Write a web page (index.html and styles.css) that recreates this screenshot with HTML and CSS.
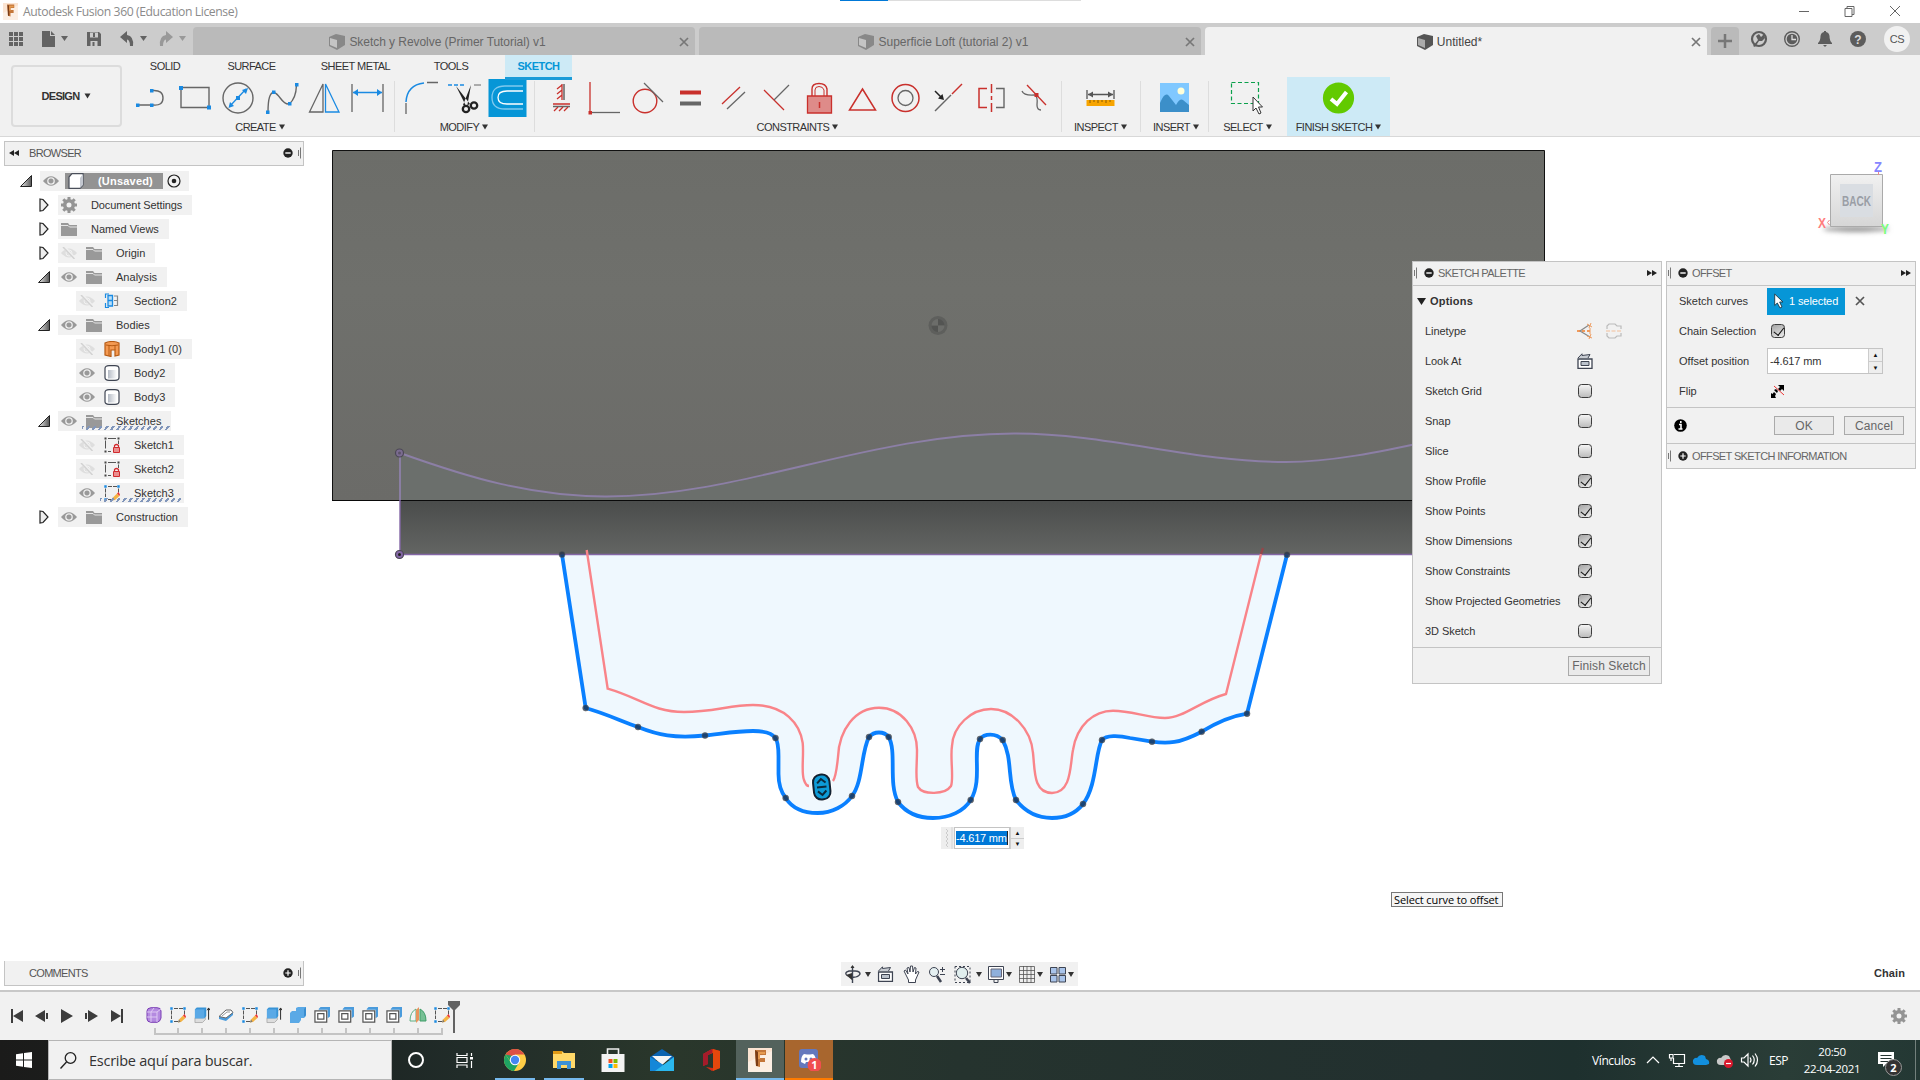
FILE: index.html
```html
<!DOCTYPE html>
<html lang="es">
<head>
<meta charset="utf-8">
<title>Autodesk Fusion 360 (Education License)</title>
<link rel="stylesheet" href="styles.css">
</head>
<body>
<svg class="defs" aria-hidden="true">
  <defs>
    <linearGradient id="gBody" x1="0" y1="0" x2="0" y2="1"><stop offset="0" stop-color="#6c6d69"/><stop offset=".4" stop-color="#6f706c"/><stop offset="1" stop-color="#6b6b68"/></linearGradient>
    <linearGradient id="gLower" x1="0" y1="0" x2="0" y2="1"><stop offset="0" stop-color="#4a4c4b"/><stop offset="1" stop-color="#636563"/></linearGradient>
    <linearGradient id="gCube" x1="0" y1="0" x2="0" y2="1"><stop offset="0" stop-color="#f1f1f1"/><stop offset="1" stop-color="#d6d6d6"/></linearGradient>
    <linearGradient id="gCyl"><stop offset="0" stop-color="#b4bac4"/><stop offset="1" stop-color="#fff"/></linearGradient>
    <linearGradient id="gTri"><stop offset="0" stop-color="#eee"/><stop offset="1" stop-color="#555"/></linearGradient>
    <filter id="soft" x="-20%" y="-200%" width="140%" height="500%"><feGaussianBlur stdDeviation="2.5"/></filter>
    <symbol id="caret" viewBox="0 0 6 6"><path d="M0 .5H6L3 5.5Z" fill="currentColor"/></symbol>
    <symbol id="doc" viewBox="0 0 16 16"><path d="M0 3L7 0L16 2V11L8 16L0 12Z" fill="currentColor"/><path d="M1 4L8 6V14L1 11Z" fill="#fff" opacity=".5"/></symbol>
    <symbol id="close" viewBox="0 0 10 10"><path d="M1 1L9 9M9 1L1 9" stroke="currentColor" stroke-width="1.7"/></symbol>
    <symbol id="minus" viewBox="0 0 10 10"><circle cx="5" cy="5" r="4.7" fill="#222"/><path d="M2.3 5H7.7" stroke="#fff" stroke-width="1.4"/></symbol>
    <symbol id="plus" viewBox="0 0 10 10"><circle cx="5" cy="5" r="4.7" fill="#222"/><path d="M2.3 5H7.7M5 2.3V7.7" stroke="#fff" stroke-width="1.2"/></symbol>
    <symbol id="grip" viewBox="0 0 4 12"><path d="M.5 3V9M2.5 .5V11.5" stroke="#777"/></symbol>
    <symbol id="ff" viewBox="0 0 10 6"><path d="M0 0L5 3L0 6ZM5 0L10 3L5 6Z" fill="#222"/></symbol>
    <symbol id="open" viewBox="0 0 12 12"><path d="M11.500 .5V11.500H.5Z" fill="url(#gTri)" stroke="#222"/></symbol>
    <symbol id="shut" viewBox="0 0 10 14"><path d="M1 1L4 1.500L9 7L4 12.500L1 13Z" fill="#eee" stroke="#222" stroke-width="1.200"/></symbol>
    <symbol id="eye" viewBox="0 0 16 10"><path d="M0 5Q8 -4.500 16 5Q8 14.500 0 5Z" fill="#999"/><circle cx="8" cy="5" r="3.200" fill="#999" stroke="#eee" stroke-width="1.300"/></symbol>
    <symbol id="eyeoff" viewBox="0 0 16 12"><path d="M0 6Q8 -3 16 6Q8 15 0 6Z" fill="#dedede"/><circle cx="8" cy="6" r="3" fill="none" stroke="#f1f1f1"/><path d="M3 0L14 12" stroke="#f1f1f1" stroke-width="3"/><path d="M2 0L13.500 12" stroke="#d2d2d2" stroke-width="1.500"/></symbol>
    <symbol id="folder" viewBox="0 0 16 13"><path d="M0 0H7L8.500 2H16V13H0Z" fill="#999"/><path d="M0 2.500H7L8.500 4H16" fill="none" stroke="#eee" stroke-width=".9"/></symbol>
    <symbol id="gear" viewBox="0 0 16 16"><circle cx="8" cy="8" r="4.300" fill="none" stroke="#949494" stroke-width="3.600"/><path d="M8 0V3M8 13V16M0 8H3M13 8H16M2.300 2.300L4.400 4.400M11.600 11.600L13.700 13.700M13.700 2.300L11.600 4.400M4.400 11.600L2.300 13.700" stroke="#949494" stroke-width="3"/></symbol>
    <symbol id="cyl" viewBox="0 0 16 16"><path d="M1 3.500Q1 .7 5 .7H11Q15 .7 15 3.500V12.500Q15 15.300 11 15.300H5Q1 15.300 1 12.500Z" fill="#fff" stroke="#3e4452" stroke-width="1.200"/><path d="M4 5H13V13.500H4Z" fill="url(#gCyl)"/></symbol>
    <symbol id="sk" viewBox="0 0 16 16"><path d="M1.500 3.500V11.500M4 1.500H12M14.500 3.500V7M4 14.500H7" stroke="#555" fill="none"/><path d="M.5 .5H2.500V2.500H.5ZM13.500 .5H15.500V2.500H13.500ZM.5 13.500H2.500V15.500H.5Z" fill="#444"/><path d="M9.500 10.500H15.500V15.500H9.500Z" fill="#ea8f8f" stroke="#d12b2f"/><path d="M10.500 10V8.500Q12.500 6.500 14.500 8.500V10" fill="none" stroke="#d12b2f" stroke-width="1.200"/></symbol>
    <symbol id="ske" viewBox="0 0 16 16"><path d="M1.500 3.500V12M4 1.500H13M14.500 3.500V8M4 14.500H8" stroke="#555" fill="none" stroke-dasharray="4 1"/><path d="M.3 .3H2.700V2.700H.3ZM13.300 .3H15.700V2.700H13.300ZM.3 13.300H2.700V15.700H.3Z" fill="#1a8ae2"/><path d="M8 15.500L9 12.500L13 8.500L15.500 11L11 15Z" fill="#f5b342"/><path d="M13 8.500L14.500 7L16 9.500L15.500 11Z" fill="#e33"/><path d="M8 15.500L9 12.500L10.500 14.700Z" fill="#777"/></symbol>
    <symbol id="look" viewBox="0 0 16 16"><path d="M1 6H15V15.300H1Z" fill="#fff" stroke="#3e4452" stroke-width="1.300"/><path d="M4 8.500H12V12.500H4Z" fill="#bcc3cc" stroke="#3e4452"/><path d="M1 5L5 .8V2.500L13 1.500L11 5" fill="#c8ccd2" stroke="#3e4452"/></symbol>
    <symbol id="ext" viewBox="0 0 17 18"><path d="M1 12H9L12 10V14L9 17H1Z" fill="#ddd" stroke="#999" stroke-width=".7"/><path d="M1 3L3 1H13V10L11 12.500H1Z" fill="#3793d6"/><path d="M1 3H11V12.500H1Z" fill="#5aa9e6"/><path d="M15.500 14V2M14 4L15.500 1.500L17 4" stroke="#222" fill="none"/></symbol>
    <symbol id="shell" viewBox="0 0 17 17"><path d="M5 2L7 0H17V10L14.500 12V3H5Z" fill="#4a9bdc"/><path d="M1 4H13.500V16H1Z" fill="#fff" stroke="#555" stroke-width="1.300"/><path d="M4 7H10.500V13H4Z" fill="#fff" stroke="#555" stroke-width="1.300"/></symbol>
    <symbol id="fusion" viewBox="0 0 24 24"><path d="M0 0H24V24H0Z" fill="#fbe4d2"/><path d="M0 14L24 3V24H0Z" fill="#fff" opacity=".4"/><path d="M7 2H18V7H12V10H17V14H12V19L8 18Z" fill="#c4773a"/><path d="M7 2L10 4V18L8 18Z" fill="#7b3c16"/><path d="M10 4H17V6H12V11H10Z" fill="#e69b51"/></symbol>
  </defs>
</svg>

<div class="app">
  <header class="titlebar">
    <svg class="app-logo" width="15" height="17" viewBox="0 0 24 24" preserveAspectRatio="none"><use href="#fusion"/></svg>
    <span class="app-title">Autodesk Fusion 360 (Education License)</span>
    <div class="progress"><i></i></div>
    <svg class="window-buttons" width="120" height="20" viewBox="0 0 120 20"><g fill="none" stroke="#666"><path d="M9 9.500H19M55 6.500H62V14.500H55ZM57 6V4.500H64V12.500H62M100 4L110 14M110 4L100 14"/></g></svg>
  </header>

  <div class="tabbar">
    <svg class="quick" width="193" height="32" viewBox="0 0 193 32" fill="#636363">
      <path d="M9 9h4v4H9zM14 9h4v4h-4zM19 9h4v4h-4zM9 14h4v4H9zM14 14h4v4h-4zM19 14h4v4h-4zM9 19h4v4H9zM14 19h4v4h-4zM19 19h4v4h-4z"/>
      <path d="M42 8h8v5h5v11H42zM51 8l4 4h-4zM61 13h7l-3.500 5z"/>
      <path d="M87 9h12l2 2v12H87z"/><path d="M90 9.500h8v5h-8zM90.500 18h7v5h-7z" fill="#ccc"/><path d="M93 10h2v4h-2zM92.500 19h2v4h-2z"/>
      <path d="M120 14L127 8v4Q134 13 133 23H130Q130 17 127 16.500V20Z"/><path d="M140 13h7l-3.500 5z"/>
      <g fill="#999"><path d="M173 14L166 8v4Q159 13 160 23H163Q163 17 166 16.500V20Z"/><path d="M179 13h7l-3.500 5z"/></g>
    </svg>
    <div class="doc-tab"><svg class="doc-icon" width="16" height="16"><use href="#doc"/></svg><span class="t1">Sketch y Revolve (Primer Tutorial) v1</span><svg class="tab-close" width="10" height="10"><use href="#close"/></svg></div>
    <div class="doc-tab"><svg class="doc-icon" width="16" height="16"><use href="#doc"/></svg><span class="t2">Superficie Loft (tutorial 2) v1</span><svg class="tab-close" width="10" height="10"><use href="#close"/></svg></div>
    <div class="doc-tab current"><svg class="doc-icon" width="16" height="16"><use href="#doc"/></svg><span>Untitled*</span><svg class="tab-close" width="10" height="10"><use href="#close"/></svg></div>
    <div class="add-tab"><svg width="14" height="14" viewBox="0 0 14 14"><path d="M7 0V14M0 7H14" stroke="#777" stroke-width="2.500"/></svg></div>
    <svg class="status-icons" width="132" height="32" viewBox="0 0 132 32">
      <circle cx="10" cy="16" r="7" fill="none" stroke="#5c5c5c" stroke-width="2.200"/><path d="M4 23L9 17L7 13L10 11L12 14L15 11L16 15L13 18L10 18L6 24Z" fill="#5c5c5c"/>
      <circle cx="43" cy="16" r="7.300" fill="#ccc" stroke="#5c5c5c" stroke-width="1.400"/><circle cx="43" cy="16" r="5.300" fill="#5c5c5c"/><path d="M43 12V16.500H47" fill="none" stroke="#ddd" stroke-width="1.300"/>
      <path d="M69 20Q71.500 18 71.500 13Q72 9.500 75 9V8H77V9Q80 9.500 80.500 13Q80.500 18 83 20V21H69ZM74 22H78L76 24Z" fill="#5c5c5c"/>
      <circle cx="109" cy="16" r="8" fill="#5c5c5c"/><text x="109" y="20.500" text-anchor="middle" class="svg-help">?</text>
    </svg>
    <span class="avatar">CS</span>
  </div>

  <div class="ribbon">
    <div class="design-cell"><div class="design">DESIGN <svg width="7" height="6"><use href="#caret"/></svg></div></div>
    <div class="ribbon-main">
      <nav class="ribbon-tabs">
        <span class="w-solid">SOLID</span><span class="w-surface">SURFACE</span><span class="w-sheet">SHEET METAL</span><span class="w-tools">TOOLS</span><span class="w-sketch active">SKETCH</span>
      </nav>
      <div class="groups">
        <section class="group g-create">
          <div class="tools">
            <svg viewBox="0 0 43 38"><path d="M8 26H20M22 11.500Q32 11 32 19T22 26" fill="none" stroke="#666" stroke-width="1.400"/><path d="M5 24.500h3.500v3.500H5zM19 24.500h3.500v3.500H19zM19 10h3.500v3.500H19z" fill="#1a8ae2"/><path d="M19.700 14V24" stroke="#f1f1f1"/></svg>
            <svg viewBox="0 0 43 38"><path d="M7 8.500H35V28.500H7Z" fill="none" stroke="#666" stroke-width="1.400"/><path d="M5 7h4v4H5zM33 26.500h4v4h-4z" fill="#1a8ae2"/></svg>
            <svg viewBox="0 0 43 38"><circle cx="21" cy="19" r="15" fill="none" stroke="#666" stroke-width="1.400"/><path d="M13 27L29 10" stroke="#1a8ae2" stroke-width="1.300"/><path d="M11.500 29L13 23L17 27ZM31 9L25 11L29 15ZM19 17h4v4h-4z" fill="#1a8ae2"/></svg>
            <svg viewBox="0 0 43 38"><path d="M8 33Q8 13 14 13.500C20 15 22 26 29 25Q36 20 36.500 6" fill="none" stroke="#666" stroke-width="1.400"/><path d="M6 31.500h3.500v3.500H6zM12 11.500h3.500v3.500H12zM28 23h3.500v3.500H28zM35 4h3.500v3.500H35z" fill="#1a8ae2"/></svg>
            <svg viewBox="0 0 43 38"><path d="M20 5V33H6.500Z" fill="none" stroke="#666" stroke-width="1.300"/><path d="M22.500 5V33H36Z" fill="none" stroke="#1a8ae2" stroke-width="1.300"/></svg>
            <svg viewBox="0 0 43 38"><path d="M6 5V33M37 5V33" stroke="#666" stroke-width="1.300"/><path d="M7 13.500H36" stroke="#1a8ae2" stroke-width="1.500"/><path d="M7 13.500L12 10V17ZM36 13.500L31 10V17Z" fill="#1a8ae2"/></svg>
          </div>
          <div class="group-label">CREATE <svg width="6" height="6"><use href="#caret"/></svg></div>
        </section>
        <section class="group g-modify">
          <div class="tools">
            <svg viewBox="0 0 43 38"><path d="M6 23Q7 6 24 4" fill="none" stroke="#1a8ae2" stroke-width="1.500"/><path d="M6 24V35M27 3.500H38" stroke="#666" stroke-width="1.300"/></svg>
            <svg viewBox="0 0 43 38"><path d="M5 6H23" stroke="#1a8ae2" stroke-width="1.300" stroke-dasharray="4 2"/><path d="M31 6H38" stroke="#666"/><path d="M13 7L27 25L23 27ZM28 6L20 26L24 28Z" fill="#222"/><circle cx="23" cy="30" r="3.200" fill="none" stroke="#222" stroke-width="2.300"/><circle cx="31" cy="26.500" r="3.200" fill="none" stroke="#222" stroke-width="2.300"/></svg>
            <svg class="tool-on" viewBox="0 0 43 38"><path d="M2.500 0H40.500V38H2.500Z" fill="#0696d7"/><path d="M37 7H19Q6 7 6 18.500T19 30H37" fill="none" stroke="#7fc9ee" stroke-width="1.300"/><path d="M37 12H21Q12 12 12 18.500T21 25H37" fill="none" stroke="#fff" stroke-width="1.300"/></svg>
          </div>
          <div class="group-label">MODIFY <svg width="6" height="6"><use href="#caret"/></svg></div>
        </section>
        <section class="group g-constraints">
          <div class="tools">
            <svg viewBox="0 0 43 38"><path d="M24 5V21M13 27.500H30" stroke="#666" stroke-width="1.500"/><path d="M22 5V21M22 6L17 10M22 11L17 15M22 16L17 20M13 25H30M18 28L14 32M23 28L19 32M28 28L24 32" stroke="#c9302c" stroke-width="1.300"/></svg>
            <svg viewBox="0 0 43 38"><path d="M7 3V33" stroke="#c9302c" stroke-width="1.300"/><path d="M8 33.500H37" stroke="#666" stroke-width="1.300"/><path d="M5.500 32h3.500v3.500H5.500z" fill="#c9302c"/></svg>
            <svg viewBox="0 0 43 38"><circle cx="19" cy="22" r="11.800" fill="none" stroke="#c9302c" stroke-width="1.400"/><path d="M18 4L37 23" stroke="#666" stroke-width="1.300"/></svg>
            <svg viewBox="0 0 43 38"><path d="M11 11.500H32V15.500H11Z" fill="#c9302c"/><path d="M11 22.500H32V26.500H11Z" fill="#666"/></svg>
            <svg viewBox="0 0 43 38"><path d="M10 25L28 8" stroke="#c9302c" stroke-width="1.300"/><path d="M15 30L33 13" stroke="#666" stroke-width="1.300"/></svg>
            <svg viewBox="0 0 43 38"><path d="M9 11L29 31" stroke="#c9302c" stroke-width="1.300"/><path d="M19 21L34 6" stroke="#666" stroke-width="1.300"/></svg>
            <svg viewBox="0 0 43 38"><path d="M14 17V10Q14 4.500 21 4.500T29 10V17" fill="none" stroke="#c9302c" stroke-width="1.400"/><path d="M17 17V11Q17 7.500 21 7.500T26 11V17" fill="none" stroke="#c9302c"/><path d="M9.500 17H33.500V34H9.500Z" fill="#de8b89" stroke="#c9302c" stroke-width="1.300"/><path d="M21.500 23V29" stroke="#c9302c" stroke-width="1.500"/></svg>
            <svg viewBox="0 0 43 38"><path d="M21.500 10L34.500 31H8.500Z" fill="none" stroke="#c9302c" stroke-width="1.500"/></svg>
            <svg viewBox="0 0 43 38"><circle cx="21.500" cy="19" r="13.500" fill="none" stroke="#c9302c" stroke-width="1.500"/><circle cx="21.500" cy="19" r="7.500" fill="none" stroke="#666" stroke-width="1.300"/></svg>
            <svg viewBox="0 0 43 38"><path d="M8 32L24 16" stroke="#666" stroke-width="1.400"/><path d="M25 15L35 5" stroke="#c9302c" stroke-width="1.400"/><path d="M8 12L14 18" stroke="#222" stroke-width="1.500"/><path d="M17 21L11 19.500L15.500 15Z" fill="#222"/></svg>
            <svg viewBox="0 0 43 38"><path d="M17 9.500H9V28.500H17M21.500 5V14M21.500 17V21M21.500 24V33" fill="none" stroke="#c9302c" stroke-width="1.500"/><path d="M26 9.500H34V28.500H26" fill="none" stroke="#666" stroke-width="1.400"/></svg>
            <svg viewBox="0 0 43 38"><path d="M14 6L33 26" stroke="#c9302c" stroke-width="1.300"/><path d="M9 12Q11 17 22 16Q25 18 24 26Q24 31 28 31" fill="none" stroke="#666" stroke-width="1.300"/><path d="M21.500 14h4v4h-4z" fill="#c9302c"/></svg>
          </div>
          <div class="group-label">CONSTRAINTS <svg width="6" height="6"><use href="#caret"/></svg></div>
        </section>
        <section class="group g-inspect">
          <div class="tools"><svg viewBox="0 0 43 38"><path d="M8 11V20M35 11V20M9 15.500H34" stroke="#555" stroke-width="1.300"/><path d="M9 15.500L14 12.500V18.500ZM34 15.500L29 12.500V18.500Z" fill="#555"/><path d="M7.500 21H35.500V27H7.500Z" fill="#f7a400"/><path d="M11 21V24M15 21V23M19 21V24M23 21V23M27 21V24M31 21V23" stroke="#8a5a00"/></svg></div>
          <div class="group-label">INSPECT <svg width="6" height="6"><use href="#caret"/></svg></div>
        </section>
        <section class="group g-insert">
          <div class="tools"><svg viewBox="0 0 43 38"><path d="M7 4H36V33H7Z" fill="#80c8ff"/><path d="M7 24Q12 12 16 17L23 26Q27 19 30 21L36 26V33H7Z" fill="#3c8fc9"/><circle cx="28" cy="12" r="3.500" fill="#ffffd9"/></svg></div>
          <div class="group-label">INSERT <svg width="6" height="6"><use href="#caret"/></svg></div>
        </section>
        <section class="group g-select">
          <div class="tools"><svg viewBox="0 0 43 38"><path d="M5.500 3.500H32.500V24.500H5.500Z" fill="none" stroke="#0aa04b" stroke-width="1.200" stroke-dasharray="4 2.500"/><path d="M27 18V32L30 29L33 35L35 34L32.500 28H36.500Z" fill="#fff" stroke="#333"/></svg></div>
          <div class="group-label">SELECT <svg width="6" height="6"><use href="#caret"/></svg></div>
        </section>
        <section class="group g-finish">
          <div class="tools"><svg viewBox="0 0 43 38"><circle cx="21.500" cy="19" r="15.600" fill="#62ca00"/><path d="M14 20L20 25L29.500 13" fill="none" stroke="#fff" stroke-width="4"/></svg></div>
          <div class="group-label">FINISH SKETCH <svg width="6" height="6"><use href="#caret"/></svg></div>
        </section>
      </div>
    </div>
  </div>

  <main class="workspace">
    <svg class="canvas" width="1920" height="853" viewBox="0 137 1920 853">
      <path d="M400 500H1500V554H400Z" fill="url(#gLower)"/>
      <path d="M332.500 150.500H1544.500V500.500H332.500Z" fill="url(#gBody)" stroke="#111"/>
      <path d="M400 453C470 478 530 496 605 496.500C740 497 870 433.500 1014 433.500C1110 433.500 1190 462 1286 462C1330 462 1380 452 1430 441V500H400Z" fill="#6b6f6c"/>
      <path d="M332 500.500H1545" stroke="#0a0a0a"/>
      <path d="M400 453C470 478 530 496 605 496.500C740 497 870 433.500 1014 433.500C1110 433.500 1190 462 1286 462C1330 462 1380 452 1430 441M400 453V500" fill="none" stroke="#8c7fa6" stroke-width="1.900"/>
      <path d="M562 554.500L585.700 708C604 713 621 721 638 727C658 735 674 738.500 705 735.500C720 734 737 731 753 731C764 731 772 733 775.500 738C778 742 778.500 747 778.500 756V774C778.500 783 781 792 785.700 798C792 808 804 813 817.700 813C832 813 845 806 852 796C863 782 861 752 869 737C874 731 884 731 888.700 737C897 752 888 783 898 802C907 814 920 818 933 818C950 818 964 811 970.700 800C983 780 972 751 980 739C984 733.500 996 732.500 1002.700 740C1013 759 1007 782 1016 800C1026 813 1039 818 1052 818C1065 818 1076 813 1083 804C1097 786 1095 752 1102 740C1106 735 1119 735.500 1130 738L1152 741.700C1168 744 1179 743.500 1201.700 731.700C1216 723 1232 716 1247 713.700L1287 554.700Z" fill="#eff8fe"/>
      <path d="M400 554.500H1430" stroke="#8467a6" stroke-width="1.400"/>
      <path d="M400 500V554" stroke="#8467a6" stroke-width="1.400"/>
      <g fill="none" stroke="#f98489" stroke-width="2.400">
        <path d="M586.700 550L607.700 688.700C640 698 653 712 684 712C713 712 730 705 753 705C785 705 800 724 802.700 743C804 755 801 773 804 780Q806 786 809 786"/>
        <path d="M833 781Q836 777 838 757C839 730 855 707.700 879 707.700C902 707.700 917 729 917 750C917 768 915 778 918 787C923 795 945 795 951 786C954 779 950 757 952 746C953 726 971 709 991 709C1012 709 1031 729 1033 753C1035 770 1033 793 1052 793C1072 793 1070 764 1073 750C1077 725 1094 710.700 1113 710.700C1132 710.700 1147 718 1165 718C1184 718 1200 701 1226 694L1261 554"/>
        <path d="M1261 554L1263 548" stroke="#94474a"/>
      </g>
      <path d="M562 554.500L585.700 708C604 713 621 721 638 727C658 735 674 738.500 705 735.500C720 734 737 731 753 731C764 731 772 733 775.500 738C778 742 778.500 747 778.500 756V774C778.500 783 781 792 785.700 798C792 808 804 813 817.700 813C832 813 845 806 852 796C863 782 861 752 869 737C874 731 884 731 888.700 737C897 752 888 783 898 802C907 814 920 818 933 818C950 818 964 811 970.700 800C983 780 972 751 980 739C984 733.500 996 732.500 1002.700 740C1013 759 1007 782 1016 800C1026 813 1039 818 1052 818C1065 818 1076 813 1083 804C1097 786 1095 752 1102 740C1106 735 1119 735.500 1130 738L1152 741.700C1168 744 1179 743.500 1201.700 731.700C1216 723 1232 716 1247 713.700L1287 554.700" fill="none" stroke="#0a80ff" stroke-width="3.800" stroke-linejoin="round"/>
      <g fill="#1f2f45" fill-opacity=".75" stroke="#555" stroke-opacity=".5">
        <circle cx="562" cy="554.500" r="3"/><circle cx="585.700" cy="708" r="3"/><circle cx="638" cy="727" r="3"/><circle cx="705" cy="735.500" r="3"/><circle cx="775.500" cy="738" r="3"/><circle cx="785.700" cy="798" r="3"/><circle cx="852" cy="796" r="3"/><circle cx="869" cy="737" r="3"/><circle cx="888.700" cy="737" r="3"/><circle cx="898" cy="802" r="3"/><circle cx="970.700" cy="800" r="3"/><circle cx="980" cy="739" r="3"/><circle cx="1002.700" cy="740" r="3"/><circle cx="1016" cy="800" r="3"/><circle cx="1083" cy="804" r="3"/><circle cx="1102" cy="740" r="3"/><circle cx="1152" cy="741.700" r="3"/><circle cx="1201.700" cy="731.700" r="3"/><circle cx="1247" cy="713.700" r="3"/><circle cx="1287" cy="554.700" r="3"/>
      </g>
      <g stroke="#4c4755" stroke-width="1.200"><circle cx="399.500" cy="453" r="4" fill="#7b6c91"/><circle cx="399.500" cy="554.500" r="4" fill="#8467a6"/></g><circle cx="399.500" cy="554.500" r="1.500" fill="#222"/><circle cx="399.500" cy="453" r="1.500" fill="#5b5268"/>
      <g opacity=".75"><circle cx="938" cy="325.500" r="9.500" fill="#595a58"/><path d="M938 325.500V319A6.500 6.500 0 0 1 944.500 325.500ZM938 325.500V332A6.500 6.500 0 0 1 931.500 325.500Z" fill="#4a4b4a"/><path d="M938 325.500H931.500A6.500 6.500 0 0 1 938 319ZM938 325.500H944.500A6.500 6.500 0 0 1 938 332Z" fill="#6c6d6a"/></g>
      <g transform="rotate(-6 821.700 787)"><rect x="811.500" y="773" width="20.500" height="28" rx="9" fill="#fff"/><rect x="813.500" y="774.500" width="16.500" height="25" rx="7.500" fill="#0d9bd7" stroke="#123" stroke-width="2"/><path d="M817.500 783L821.700 779L826 783M817.500 791L821.700 795L826 791M817 787H826.500" fill="none" stroke="#0b2a3d" stroke-width="2"/></g>
      <ellipse cx="1856" cy="229" rx="33" ry="3" fill="#999" filter="url(#soft)"/>
      <path d="M1830.500 174.500H1882.500V226.500H1830.500Z" fill="url(#gCube)" stroke="#aaa"/><path d="M1840 184H1873V217H1840Z" fill="#d9dde2"/>
      <g class="cube-text"><text x="1842" y="206" textLength="29" lengthAdjust="spacingAndGlyphs" fill="#999ea6">BACK</text><text x="1874" y="172" textLength="8" lengthAdjust="spacingAndGlyphs" fill="#8686ff">Z</text><text x="1818" y="228" textLength="8" lengthAdjust="spacingAndGlyphs" fill="#ff7d7d">X</text><text x="1881" y="234" textLength="8" lengthAdjust="spacingAndGlyphs" fill="#7aff7a">Y</text></g>
      <path d="M1829.500 220L1827.500 222.500L1829.500 225M1878.500 172V175" stroke="#e88" fill="none"/>
    </svg>

    <aside class="browser">
      <div class="bar browser-head"><svg class="flip" width="10" height="6"><use href="#ff"/></svg><span class="bar-title">BROWSER</span><svg width="10" height="10"><use href="#minus"/></svg><svg width="4" height="12"><use href="#grip"/></svg></div>
      <div class="tree">
        <div class="row root"><svg class="arrow" width="12" height="12"><use href="#open"/></svg><div class="pill"><svg width="16" height="10"><use href="#eye"/></svg><div class="sel"><svg width="16" height="16" viewBox="0 0 16 16"><path d="M1 4L4 .7H15V12L12 15.300H1Z" fill="#fff" stroke="#4a4f5a" stroke-width="1.200"/><path d="M12 5V15L15 12V1Z" fill="#c3c7cf"/></svg><b>(Unsaved)</b></div><svg width="14" height="14" viewBox="0 0 14 14"><circle cx="7" cy="7" r="6" fill="none" stroke="#222" stroke-width="1.200"/><circle cx="7" cy="7" r="2.300" fill="#222"/></svg></div></div>
        <div class="row"><svg class="arrow" width="10" height="14"><use href="#shut"/></svg><div class="pill"><svg width="16" height="16"><use href="#gear"/></svg><span class="nm tight">Document Settings</span></div></div>
        <div class="row"><svg class="arrow" width="10" height="14"><use href="#shut"/></svg><div class="pill"><svg width="16" height="13"><use href="#folder"/></svg><span class="nm">Named Views</span></div></div>
        <div class="row"><svg class="arrow" width="10" height="14"><use href="#shut"/></svg><div class="pill"><svg width="16" height="12"><use href="#eyeoff"/></svg><svg class="ico" width="16" height="13"><use href="#folder"/></svg><span class="nm">Origin</span></div></div>
        <div class="row"><svg class="arrow" width="12" height="12"><use href="#open"/></svg><div class="pill"><svg width="16" height="10"><use href="#eye"/></svg><svg class="ico" width="16" height="13"><use href="#folder"/></svg><span class="nm">Analysis</span></div></div>
        <div class="row leaf"><div class="pill"><svg width="16" height="12"><use href="#eyeoff"/></svg><svg class="ico" width="16" height="16" viewBox="0 0 16 16"><path d="M5 1H1.500V5M1.500 10V14.500H5" fill="none" stroke="#1a8ae2" stroke-width="1.200"/><path d="M4 2.500H8.500V13H4ZM4 7.500H8.500" fill="#b9def7" stroke="#1a8ae2" stroke-width="1.300"/><path d="M10 3H13.500V12.500H10M10 7.500H13.500" fill="none" stroke="#888" stroke-width="1.200"/></svg><span class="nm">Section2</span></div></div>
        <div class="row"><svg class="arrow" width="12" height="12"><use href="#open"/></svg><div class="pill"><svg width="16" height="10"><use href="#eye"/></svg><svg class="ico" width="16" height="13"><use href="#folder"/></svg><span class="nm">Bodies</span></div></div>
        <div class="row leaf"><div class="pill"><svg width="16" height="12"><use href="#eyeoff"/></svg><svg class="ico" width="16" height="16" viewBox="0 0 16 16"><path d="M1 2Q8 -1 15 2V14L11 15V9H7V15.500L1 14Z" fill="#f49a52" stroke="#b65a13" stroke-width="1.200"/><path d="M5 4V15M11 4V9M2 4Q8 5.500 14 4" stroke="#b65a13" fill="none"/></svg><span class="nm">Body1 (0)</span></div></div>
        <div class="row leaf"><div class="pill"><svg width="16" height="10"><use href="#eye"/></svg><svg class="ico" width="16" height="16"><use href="#cyl"/></svg><span class="nm">Body2</span></div></div>
        <div class="row leaf"><div class="pill"><svg width="16" height="10"><use href="#eye"/></svg><svg class="ico" width="16" height="16"><use href="#cyl"/></svg><span class="nm">Body3</span></div></div>
        <div class="row"><svg class="arrow" width="12" height="12"><use href="#open"/></svg><div class="pill hatch"><svg width="16" height="10"><use href="#eye"/></svg><svg class="ico" width="16" height="13"><use href="#folder"/></svg><span class="nm">Sketches</span></div></div>
        <div class="row leaf"><div class="pill"><svg width="16" height="12"><use href="#eyeoff"/></svg><svg class="ico" width="16" height="16"><use href="#sk"/></svg><span class="nm">Sketch1</span></div></div>
        <div class="row leaf"><div class="pill"><svg width="16" height="12"><use href="#eyeoff"/></svg><svg class="ico" width="16" height="16"><use href="#sk"/></svg><span class="nm">Sketch2</span></div></div>
        <div class="row leaf"><div class="pill hatch"><svg width="16" height="10"><use href="#eye"/></svg><svg class="ico" width="16" height="16"><use href="#ske"/></svg><span class="nm">Sketch3</span></div></div>
        <div class="row"><svg class="arrow" width="10" height="14"><use href="#shut"/></svg><div class="pill"><svg width="16" height="10"><use href="#eye"/></svg><svg class="ico" width="16" height="13"><use href="#folder"/></svg><span class="nm">Construction</span></div></div>
      </div>
    </aside>

    <aside class="panel palette">
      <div class="panel-head"><svg width="4" height="12"><use href="#grip"/></svg><svg width="10" height="10"><use href="#minus"/></svg><span>SKETCH PALETTE</span><svg width="10" height="6"><use href="#ff"/></svg></div>
      <div class="options-title"><svg width="9" height="7" viewBox="0 0 6 6" preserveAspectRatio="none"><path d="M0 0H6L3 6Z" fill="#222"/></svg><b>Options</b></div>
      <div class="opt"><span>Linetype</span><svg width="16" height="16" viewBox="0 0 16 16"><path d="M12 2L3 8L13 14" fill="none" stroke="#888" stroke-width="1.200"/><path d="M0 8H14" stroke="#ee7e2d" stroke-width="1.300" stroke-dasharray="3 2"/><path d="M13 5V11M10 1L15 4M14 0L12 5M10 13L15 15M14 11L12 16" stroke="#ee9a5d"/></svg><svg class="second" width="16" height="16" viewBox="0 0 16 16"><path d="M1 6V3L3 1H9L11 3H15V6M1 10V13L3 15H9L11 13H15V10" fill="none" stroke="#bbb" stroke-width="1.200"/><path d="M0 8H16" stroke="#f4c09a" stroke-width="1.200" stroke-dasharray="4 1.500"/></svg></div>
      <div class="opt"><span>Look At</span><svg width="16" height="16"><use href="#look"/></svg></div>
      <div class="opt"><span>Sketch Grid</span><i class="check"></i></div>
      <div class="opt"><span>Snap</span><i class="check"></i></div>
      <div class="opt"><span>Slice</span><i class="check"></i></div>
      <div class="opt"><span>Show Profile</span><i class="check on"></i></div>
      <div class="opt"><span>Show Points</span><i class="check on"></i></div>
      <div class="opt"><span>Show Dimensions</span><i class="check on"></i></div>
      <div class="opt"><span>Show Constraints</span><i class="check on"></i></div>
      <div class="opt"><span>Show Projected Geometries</span><i class="check on"></i></div>
      <div class="opt"><span>3D Sketch</span><i class="check"></i></div>
      <div class="panel-foot"><button class="btn finish">Finish Sketch</button></div>
    </aside>

    <aside class="panel offset">
      <div class="panel-head"><svg width="4" height="12"><use href="#grip"/></svg><svg width="10" height="10"><use href="#minus"/></svg><span>OFFSET</span><svg width="10" height="6"><use href="#ff"/></svg></div>
      <div class="field"><span>Sketch curves</span><div class="selected"><svg width="10" height="16" viewBox="0 0 10 16"><path d="M.7 1V12.500L3.300 10L6 15L8 14L5.700 9H9Z" fill="#fff" stroke="#245"/></svg>1 selected</div><svg class="clear" width="10" height="10"><use href="#close"/></svg></div>
      <div class="field"><span>Chain Selection</span><i class="check on"></i></div>
      <div class="field"><span>Offset position</span><div class="num"><em>-4.617 mm</em><div class="spin"><i>▲</i><i>▼</i></div></div></div>
      <div class="field"><span>Flip</span><svg class="flip-icon" width="13" height="13" viewBox="0 0 13 13"><path d="M13 0V6L11 4L9 6L7 4L9 2L7 0ZM0 13V8L1.500 9L3 7L5 9L4 11L5 13ZM3 5L6 8L7 6L5 4Z"/><path d="M3 1L13 10" stroke="#e33"/></svg></div>
      <div class="confirm"><svg width="13" height="13" viewBox="0 0 13 13"><circle cx="6.500" cy="6.500" r="6.300"/><path d="M6.800 2V4M5 5.500H7V10M4.500 10H8.500" fill="none" stroke="#fff" stroke-width="1.600"/></svg><button class="btn">OK</button><button class="btn">Cancel</button></div>
      <div class="panel-head info"><svg width="4" height="12"><use href="#grip"/></svg><svg width="10" height="10"><use href="#plus"/></svg><span>OFFSET SKETCH INFORMATION</span></div>
    </aside>

    <div class="value-box"><svg width="13" height="22" viewBox="0 0 13 22"><path d="M5 2L7 4L5 6L7 8L5 10L7 12L5 14L7 16L5 18L7 20" fill="none" stroke="#ccc"/><path d="M11 0V22" stroke="#ddd" stroke-width="1.500"/></svg><div class="value"><span>-4.617 mm</span></div><div class="spin"><i>▲</i><i>▼</i></div></div>
    <div class="tip">Select curve to offset</div>
    <div class="bar comments"><span class="bar-title">COMMENTS</span><svg width="10" height="10"><use href="#plus"/></svg><svg width="4" height="12"><use href="#grip"/></svg></div>

    <svg class="navbar" width="237" height="24" viewBox="841 962 237 24" fill="none" stroke="#3e4452">
      <path d="M852.500 966V983M848 976Q843 973 849 971Q860 970 860 974Q858 978 851 977" stroke-width="1.400"/><path d="M846 975L852 973V980ZM850.500 968L852.500 965L854.500 968" fill="#333" stroke="none"/>
      <svg x="877" y="966" width="17" height="16" viewBox="0 0 16 16"><use href="#look"/></svg>
      <path d="M906 975L904 971L905.500 970L908 974L907 968L909 967.500L910 972L910.500 966H912.500L913 972L914.500 967.500L916 968L915.500 974L917.500 971.500L919 972L915.500 980V982.500H908.500V980Z" fill="#fff"/>
      <circle cx="934" cy="972" r="4.500" fill="#e5f0f2"/><path d="M937 976L941 982" stroke-width="2.500"/><path d="M940 969.500H945M942.500 967V972M940 974.500H945"/>
      <path d="M955 966.500H970V982.500H955Z" stroke-dasharray="2 2"/><circle cx="962" cy="973" r="5.700" fill="#e0eeee"/><path d="M966 978L970 983" stroke-width="2.500"/>
      <path d="M988.500 966.500H1003.500V979.500H988.500Z" fill="#fff"/><path d="M991 969H1001.500V977H991Z" fill="#8fb0dc" stroke="#667"/><path d="M994 980V982.500H998V980"/>
      <path d="M1019.500 966.500H1034.500V982.500H1019.500ZM1023.500 966V983M1027 966V983M1031 966V983M1019 970.500H1035M1019 974.500H1035M1019 978.500H1035" fill="#eee" stroke="#555" stroke-width=".8"/>
      <path d="M1050.500 967.500H1057V974H1050.500ZM1059 967.500H1065.500V974H1059ZM1050.500 975.500H1057V982H1050.500ZM1059 975.500H1065.500V982H1059Z" fill="#a9c4ea"/>
      <path d="M865 972h6l-3 5zM976 972h6l-3 5zM1006 972h6l-3 5zM1037 972h6l-3 5zM1068 972h6l-3 5z" fill="#333" stroke="none"/>
    </svg>
    <b class="mode">Chain</b>
  </main>

  <div class="timeline">
    <svg class="play" width="146" height="48" viewBox="0 992 146 48" fill="#3c3c3c"><path d="M11 1009h2v14h-2zM23 1010V1022L13 1016ZM45 1010V1022L35 1016ZM46 1013h2v6h-2zM61 1009V1023L73 1016ZM85 1013h2v6h-2zM88 1010V1022L98 1016ZM111 1010V1022L121 1016ZM121 1009h2v14h-2z"/></svg>
    <div class="history">
      <div class="features">
        <svg viewBox="0 0 16 16"><path d="M1 4Q1 1 5 .7H11Q15 .7 15 4V11Q14 15 11 15.300H5Q1 15 1 12Z" fill="#b48ae0" stroke="#7b3fb5"/><path d="M5 5V15M1 10H11M11 5V15M1 5H11L15 2M8 1L5 5" stroke="#e3cff5" fill="none" stroke-width=".9"/></svg>
        <svg><use href="#ske"/></svg>
        <svg><use href="#ext"/></svg>
        <svg viewBox="0 0 16 16"><path d="M1 10L8 3H13L15 6V8L8 14L1 12Z" fill="#4a9bdc"/><path d="M1 9.500L8 3H13L15 5.500L8 11Z" fill="#fff" stroke="#666"/><path d="M4 9L9 5H12" stroke="#999" fill="none"/></svg>
        <svg><use href="#ske"/></svg>
        <svg><use href="#ext"/></svg>
        <svg viewBox="0 0 16 16"><path d="M0 6L2 4H6V1L8 0H16V9L14 11H11V13L9 16H0Z" fill="#5aa9e6"/><path d="M6 10H14L16 8V0L14 2V10" fill="#3a8dcf"/></svg>
        <svg><use href="#shell"/></svg><svg><use href="#shell"/></svg><svg><use href="#shell"/></svg><svg><use href="#shell"/></svg>
        <svg viewBox="0 0 16 16"><path d="M0 14Q0 5 6 2V14Z" fill="#f3f3f3" stroke="#5fae82"/><path d="M10 2Q16 5 16 14H10Z" fill="#77c095" stroke="#3e9d68"/><path d="M6 3L9 0V13L6 16Z" fill="#e8935c"/></svg>
        <svg><use href="#ske"/></svg>
      </div>
      <svg class="track" width="312" height="8" viewBox="0 0 312 8"><path d="M9 0V6H296V0M32 0V6M56 0V6M80 0V6M104 0V6M128 0V6M152 0V6M176 0V6M200 0V6M224 0V6M248 0V6M272 0V6" fill="none" stroke="#c4c4c4" stroke-width="2"/></svg>
    </div>
    <svg class="marker" width="12" height="32" viewBox="0 0 12 32"><path d="M0 0H12V4L7 9V32H5V9L0 4Z" fill="#636363"/></svg>
    <svg class="settings" width="16" height="16"><use href="#gear"/></svg>
  </div>

  <footer class="taskbar">
    <div class="start"><svg width="16" height="16" viewBox="0 0 16 16"><path d="M0 2.200L7 1.200V7.500H0ZM8 1L16 0V7.500H8ZM0 8.500H7V14.800L0 13.800ZM8 8.500H16V16L8 15Z" fill="#fff"/></svg></div>
    <div class="search"><svg width="17" height="17" viewBox="0 0 17 17"><circle cx="10.500" cy="6" r="5.300" fill="none" stroke="#222" stroke-width="1.300"/><path d="M6.500 10L.5 16.500" stroke="#222" stroke-width="1.400"/></svg><span>Escribe aquí para buscar.</span></div>
    <div class="apps">
      <div class="app-btn"><svg viewBox="0 0 24 24"><circle cx="12" cy="12" r="7" fill="none" stroke="#fff" stroke-width="2"/></svg></div>
      <div class="app-btn taskview"><svg viewBox="0 0 24 24"><path d="M4 5V7.500H14V5M4 9.500H14V14.500H4ZM4 20V17H14V20M18.500 5V8M18.500 13V20" fill="none" stroke="#fff" stroke-width="1.200"/><path d="M17 9H20V11.500H17Z" fill="#fff"/></svg></div>
      <div class="app-btn running"><svg viewBox="0 0 24 24"><circle cx="12" cy="12" r="11" fill="#ffcd46"/><path d="M12 12L2.500 6.500A11 11 0 0 1 21.500 6.500H12Z" fill="#dd5144"/><path d="M2.500 6.500A11 11 0 0 0 11 23L16.500 14L12 12L7.500 14Z" fill="#1ea362"/><path d="M2.500 6.500L8 14L10 8Z" fill="#1ea362"/><circle cx="12" cy="12" r="5.200" fill="#fff"/><circle cx="12" cy="12" r="4.200" fill="#4587f3"/></svg></div>
      <div class="app-btn running"><svg viewBox="0 0 24 24"><path d="M1 3H10L12 5H23V20H1Z" fill="#ffd868"/><path d="M1 3H10V6H1Z" fill="#e09a16"/><path d="M5 13H19V21H15V17H9V21H5Z" fill="#3e92d6"/></svg></div>
      <div class="app-btn"><svg viewBox="0 0 24 24"><path d="M6.500 7V1H17.500V7" fill="none" stroke="#eee" stroke-width="1.600"/><path d="M.5 6H23.500V24H.5Z" fill="#f3f3f3"/><path d="M7.500 11h4v4h-4z" fill="#f25022"/><path d="M12.500 11h4v4h-4z" fill="#7fba00"/><path d="M7.500 16h4v4h-4z" fill="#00a4ef"/><path d="M12.500 16h4v4h-4z" fill="#ffb900"/></svg></div>
      <div class="app-btn"><svg viewBox="0 0 24 24"><path d="M0 9L12 1L24 9V12H0Z" fill="#0b63b1"/><path d="M2 8H22L12 17Z" fill="#f5f5f5"/><path d="M0 9L24 23H0Z" fill="#1487d8"/><path d="M24 9L5 23H24Z" fill="#2bb8ee"/></svg></div>
      <div class="app-btn"><svg viewBox="0 0 24 24"><path d="M4 6L13 1L21 3V20L13 23L7 19L14 20V5L9 7V16L4 18Z" fill="#d42c16"/><path d="M14 1L21 3V20L14 23Z" fill="#e5470c"/><path d="M4 6L13 1V5L9 7V16L4 18Z" fill="#a51c2b"/></svg></div>
      <div class="app-btn running front"><svg viewBox="0 0 24 24"><use href="#fusion"/></svg></div>
      <div class="app-btn alert"><svg viewBox="0 0 24 24"><rect x="2" y="2" width="19" height="19" rx="3" fill="#6478bd"/><path d="M4 15Q4 9 7 7L10 7.500H13L16 7Q19 9 19 15L15 17L14 15H9L8 17Z" fill="#fff"/><circle cx="9" cy="12" r="1.500" fill="#6478bd"/><circle cx="14" cy="12" r="1.500" fill="#6478bd"/><circle cx="17.500" cy="18" r="7" fill="#f04f4f"/><text x="17.500" y="22" text-anchor="middle" class="badge-text">1</text></svg></div>
    </div>
    <div class="tray">
      <span class="links">Vínculos</span>
      <svg class="tray-icons" width="120" height="40" viewBox="1644 1040 120 40" fill="none" stroke="#fff" stroke-width="1.200"><path d="M1647 1063L1653 1057L1659 1063"/><path d="M1674 1054.500H1684.500V1063.500H1673.500V1058M1679 1064V1066.500M1675 1066.500H1683M1669.500 1054.500H1673V1058H1669.500ZM1671 1058V1061"/><path d="M1697 1065Q1692 1065 1693 1060Q1695 1057 1697 1058Q1700 1053 1705 1056L1706 1059Q1710 1060 1709 1064L1706 1065Z" fill="#1290df" stroke="none"/><path d="M1721 1065Q1716 1065 1717 1060Q1719 1057 1721 1058Q1724 1053 1729 1056L1731 1060V1065Z" fill="#c9c9c9" stroke="none"/><circle cx="1728.500" cy="1063.500" r="4.500" fill="#d9182d" stroke="none"/><path d="M1726 1063.500H1731"/><path d="M1741.500 1058H1744L1748 1054V1066L1744 1062H1741.500ZM1750 1057.500Q1752 1060 1750 1062.500M1752.500 1055.500Q1756 1060 1752.500 1064.500M1755 1053.500Q1760 1060 1755 1066.500"/></svg>
      <span class="lang">ESP</span>
      <div class="clock"><span>20:50</span><span>22-04-2021</span></div>
      <svg class="notice" width="34" height="40" viewBox="1876 1040 34 40"><path d="M1879 1052H1895V1064H1887L1884 1067V1064H1879Z" fill="#fff"/><path d="M1881.500 1055.500H1892.500M1881.500 1058.500H1892.500M1881.500 1061.500H1889" stroke="#263633"/><circle cx="1894.500" cy="1067.500" r="8" fill="#333" stroke="#999"/><text x="1894.500" y="1071.500" text-anchor="middle" class="badge-text">2</text></svg>
    </div>
  </footer>
</div>
</body>
</html>
```
FILE: styles.css
```css
* { box-sizing: border-box; }
body { margin: 0; overflow: hidden; font: 11px "Liberation Sans", Arial, sans-serif; color: #333; background: #fff; }
svg { display: block; flex: none; }
i, em { font-style: normal; }
.defs { position: absolute; width: 0; height: 0; }
.app { width: 1920px; height: 1080px; display: flex; flex-direction: column; }

/* window title */
.titlebar { height: 23px; display: flex; align-items: center; padding-left: 3px; }
.app-title { margin-left: 5px; width: 817px; font: 12.2px "Open Sans", sans-serif; letter-spacing: -.41px; color: #8b8b8b; white-space: nowrap; }
.progress { width: 241px; height: 1px; align-self: flex-start; background: #ddd; }
.progress i { display: block; width: 48px; height: 1px; background: #0078d7; }
.window-buttons { margin-left: auto; margin-right: 10px; }

/* document tabs */
.tabbar { height: 32px; background: #ccc; display: flex; align-items: flex-end; }
.doc-tab { position: relative; width: 502px; height: 28px; margin-right: 4px; background: #bababa; border-radius: 4px 4px 0 0; display: flex; align-items: center; justify-content: center; gap: 4px; padding: 1px 40px 0 27px; font-size: 12px; color: #666; }
.doc-tab .t1 { letter-spacing: -.05px; }
.doc-tab.current { background: #f1f1f1; color: #444; }
.doc-icon { color: #888; }
.current .doc-icon { color: #555; }
.tab-close { position: absolute; right: 6px; top: 10px; color: #777; }
.add-tab { width: 28px; height: 28px; background: #bababa; border-radius: 4px 4px 0 0; display: grid; place-items: center; }
.status-icons { margin-left: 10px; }
.svg-help { font: bold 12px "Liberation Sans", sans-serif; fill: #ddd; }
.avatar { width: 26px; height: 26px; margin: 0 0 3px 3px; border-radius: 50%; background: #f1f1f1; display: grid; place-items: center; font-size: 11px; letter-spacing: -.5px; color: #555; }

/* ribbon */
.ribbon { height: 82px; background: #f1f1f1; border-bottom: 1px solid #d8d8d8; display: flex; }
.design-cell { width: 130px; padding: 10px 0 0 11px; }
.design { width: 111px; height: 62px; border: 2px solid #dcdcdc; border-radius: 4px; display: flex; align-items: center; justify-content: center; gap: 5px; font-weight: bold; letter-spacing: -.7px; }
.ribbon-tabs { display: flex; height: 22px; }
.ribbon-tabs span { text-align: center; line-height: 22px; letter-spacing: -.55px; }
.w-solid { width: 70px; }
.w-surface { width: 103px; }
.w-sheet { width: 105px; }
.w-tools { width: 86px; margin-right: 11px; }
.w-sketch { width: 67px; height: 25px; background: #cdeaf6; color: #0696d7; font-weight: bold; border-bottom: 3px solid #1a9bd8; z-index: 1; }
.groups { display: flex; height: 59px; }
.group { position: relative; display: flex; flex-direction: column; align-items: center; }
.group + .group:not(.g-finish)::before { content: ""; position: absolute; left: 0; top: 4px; width: 1px; height: 51px; background: #ddd; }
.tools { display: flex; height: 42px; padding-top: 2px; }
.tools svg { width: 43px; height: 38px; }
.group-label { display: flex; align-items: center; gap: 3px; height: 15px; letter-spacing: -.55px; white-space: nowrap; }
.g-create { width: 264px; padding-right: 4px; }
.g-modify { width: 140px; }
.g-constraints { width: 527px; }
.g-inspect { width: 79px; }
.g-insert { width: 68px; }
.g-insert .group-label { padding-left: 4px; }
.g-select { width: 79px; }
.g-finish { width: 103px; background: #cdeaf6; }

/* canvas */
.workspace { position: relative; height: 853px; }
.cube-text { font: bold 15px "Liberation Sans", sans-serif; }
.bar { width: 300px; height: 25px; border: 1px solid #c4c4c4; background: #f1f1f1; display: flex; align-items: center; padding: 0 1px 0 4px; color: #555; }
.browser-head { padding-bottom: 1px; }
.bar-title { margin-left: 10px; margin-right: auto; font-size: 11px; letter-spacing: -.68px; }
.bar svg + svg { margin-left: 5px; }
.flip { transform: scaleX(-1); }
.browser { position: absolute; left: 4px; top: 4px; }
.tree { padding-top: 5px; display: flex; flex-direction: column; gap: 4px; }
.row { display: flex; height: 20px; align-items: center; }
.row .arrow { width: 12px; margin-left: 34px; margin-right: 8px; }
.row.root .arrow { margin-left: 16px; }
.row.leaf { padding-left: 72px; }
.pill { position: relative; height: 20px; background: #f1f1f1; display: flex; align-items: center; padding: 0 10px 0 3px; }
.ico { margin-left: 9px; }
.nm { margin-left: 14px; letter-spacing: .02px; white-space: nowrap; }
.nm.tight { letter-spacing: -.1px; }
.root .pill { padding-right: 8px; }
.sel { width: 98px; height: 16px; margin: 0 4px 0 6px; background: #939393; color: #fff; display: flex; align-items: center; gap: 14px; padding-left: 3px; letter-spacing: .2px; }
.hatch::after { content: ""; position: absolute; left: 24px; right: 1px; bottom: 1px; height: 4px; background: repeating-linear-gradient(125deg, #8196bb 0 2px, transparent 2px 5px); }
.comments { position: absolute; left: 4px; top: 824px; border-top: 0; padding-left: 14px; }

/* floating panels */
.panel { position: absolute; top: 124px; width: 250px; background: #f1f1f1; border: 1px solid #c4c4c4; }
.palette { left: 1412px; height: 423px; }
.offset { left: 1666px; height: 208px; }
.panel-head { height: 24px; border-bottom: 1px solid #c4c4c4; display: flex; align-items: center; padding: 0 4px 2px 1px; color: #666; }
.panel-head span { margin-left: 4px; margin-right: auto; letter-spacing: -.62px; }
.panel-head svg + svg { margin-left: 6px; }
.options-title { display: flex; align-items: center; gap: 4px; height: 30px; padding-left: 4px; letter-spacing: .2px; }
.opt { height: 30px; display: flex; align-items: center; padding-left: 12px; letter-spacing: -.06px; }
.opt span { width: 152px; white-space: nowrap; }
.second { margin-left: 13px; }
.check { width: 14px; height: 14px; margin-left: 1px; border: 1px solid #3c3c3c; border-radius: 3.5px; background: linear-gradient(#f4f4f4, #bdbdbd); position: relative; }
.check.on { background: linear-gradient(155deg, #a4a4a4, #ededed); }
.check.on::after { content: ""; position: absolute; left: 4px; top: 0; width: 4.5px; height: 9px; border: solid #111; border-width: 0 1.5px 1.5px 0; transform: rotate(38deg); }
.panel-foot { height: 37px; margin-top: 1px; border-top: 1px solid #c4c4c4; display: flex; justify-content: flex-end; padding: 8px 11px 0; }
.btn { width: 60px; height: 19px; padding: 0; border: 1px solid #aaa; background: #eaeaea; font: 12px "Liberation Sans", sans-serif; letter-spacing: .1px; color: #666; }
.btn.finish { width: 82px; height: 20px; }
.field { height: 30px; display: flex; align-items: center; padding-left: 12px; letter-spacing: 0; }
.field span { width: 88px; }
.field .check { margin-left: 4px; }
.selected { width: 78px; height: 27px; background: #0696d7; color: #fff; display: flex; align-items: center; gap: 5px; padding-left: 7px; letter-spacing: -.1px; }
.clear { margin-left: 10px; color: #555; }
.num { width: 116px; height: 26px; border: 1px solid #c4c4c4; background: #fff; display: flex; justify-content: space-between; align-items: center; padding-left: 2px; letter-spacing: -.15px; }
.spin { width: 14px; height: 100%; display: grid; grid-template-rows: 1fr 1fr; border-left: 1px solid #ccc; background: #eee; }
.spin i { display: grid; place-items: center; font-size: 6px; line-height: 6px; color: #111; }
.spin i + i { border-top: 1px solid #ccc; }
.flip-icon { margin-left: 4px; }
.confirm { height: 37px; margin-top: 1px; border-top: 1px solid #c4c4c4; border-bottom: 1px solid #c4c4c4; display: flex; align-items: center; gap: 10px; padding: 0 11px 0 7px; }
.confirm svg { margin-right: auto; }
.panel-head.info { border: 0; padding-bottom: 0; }

.value-box { position: absolute; left: 941px; top: 690px; width: 83px; height: 22px; background: #eee; display: flex; }
.value { width: 56px; border: 1px solid #c4c4c4; background: #fff; display: flex; align-items: center; }
.value span { margin-left: 1px; background: #0078d7; color: #fff; width: 52px; line-height: 14px; font-size: 11px; letter-spacing: -.2px; border-right: 1px solid #222; white-space: nowrap; overflow: hidden; }
.tip { position: absolute; left: 1391px; top: 755px; width: 112px; height: 15px; border: 1px solid #777; background: #f5f5f5; color: #000; font: 11px/13px "Open Sans", sans-serif; letter-spacing: -.12px; padding-left: 2px; white-space: nowrap; }
.navbar { position: absolute; left: 841px; top: 825px; background: #f1f1f1; }
.mode { position: absolute; left: 1874px; top: 830px; letter-spacing: .1px; }

/* timeline */
.timeline { height: 50px; border-top: 2px solid #c8c8c8; background: #f1f1f1; display: flex; }
.history { width: 302px; padding-top: 14px; }
.features { display: flex; gap: 8px; height: 18px; width: 302px; }
.features svg { width: 16px; height: 18px; overflow: visible; }
.track { margin-top: 4px; }
.marker { margin: 9px 0 0; }
.settings { margin: 16px 13px 0 auto; }

/* taskbar */
.taskbar { height: 40px; display: flex; background: linear-gradient(90deg, #1b1b1a 0, #1e2725 20%, #212c29 24%, #2a372b 35%, #25332e 50%, #22302f 75%, #1e302e 82%, #2a3d37 93%, #243834 100%); font: 12px "Open Sans", sans-serif; color: #fff; }
.start { width: 48px; display: grid; place-items: center; }
.search { width: 344px; border: 1px solid #b5b5b5; background: #f1f1f1; color: #333; display: flex; align-items: center; padding-left: 11px; gap: 12px; font-size: 14.500px; letter-spacing: -.25px; }
.apps { display: flex; gap: 1px; width: 1200px; }
.app-btn { width: 48px; height: 40px; display: grid; place-items: center; position: relative; }
.app-btn.taskview { margin-right: 1px; }
.app-btn svg { width: 24px; height: 24px; }
.app-btn.running::after { content: ""; position: absolute; left: 4px; right: 4px; bottom: 0; height: 2px; background: #76b9ed; }
.app-btn.front { background: #53625c; }
.app-btn.front::after { left: 0; right: 0; }
.app-btn.alert { background: #a8662e; border-bottom: 2px solid #ff7b00; }
.badge-text { font: bold 11px "Open Sans", sans-serif; fill: #fff; }
.tray { display: flex; align-items: center; width: 324px; border-right: 1px solid #73807c; margin-right: 4px; }
.links { width: 52px; letter-spacing: -.4px; }
.lang { margin-left: 5px; width: 19px; letter-spacing: -.5px; }
.clock { margin-left: 14px; width: 60px; display: flex; flex-direction: column; align-items: center; line-height: 17px; font-size: 11.500px; letter-spacing: -.35px; white-space: nowrap; }
.notice { margin-left: 13px; }
```
